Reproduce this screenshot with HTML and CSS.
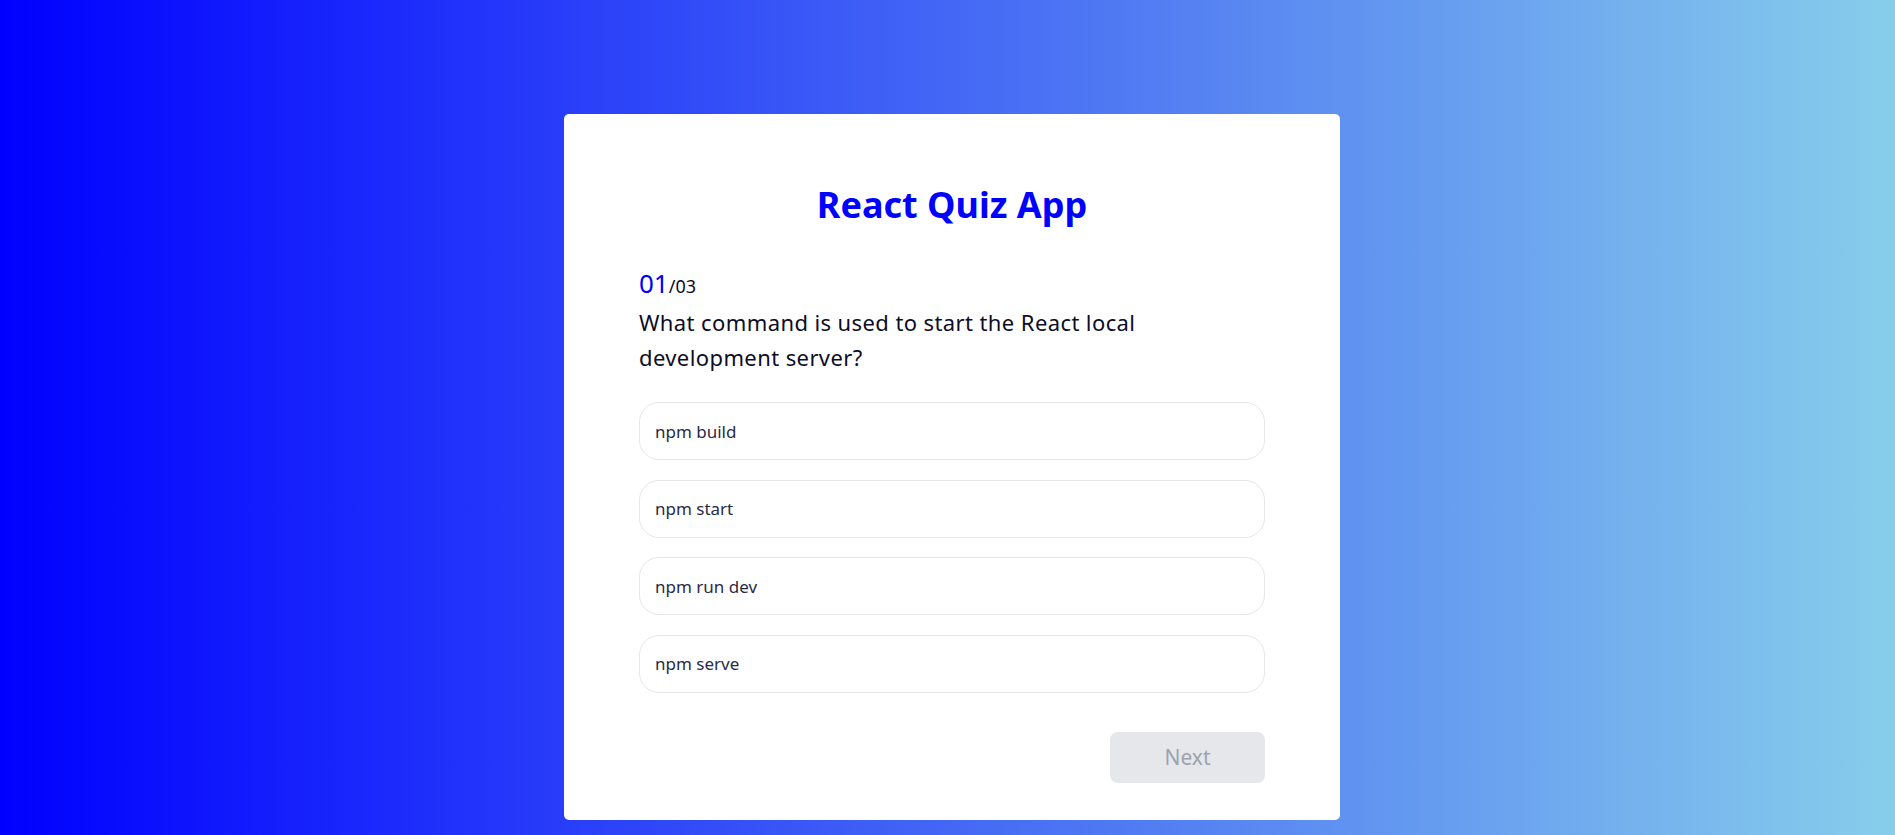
FILE: index.html
```html
<!DOCTYPE html>
<html lang="en">
<head>
<meta charset="utf-8">
<title>React Quiz App</title>
<link rel="stylesheet" href="styles.css">
</head>
<body>
<div class="page">
  <div class="card">
    <h1 class="title">React Quiz App</h1>
    <div class="counter"><span class="current">01</span><span class="total">/03</span></div>
    <p class="question">What command is used to start the React local development server?</p>
    <ul class="options">
      <li class="option">npm build</li>
      <li class="option">npm start</li>
      <li class="option">npm run dev</li>
      <li class="option">npm serve</li>
    </ul>
    <div class="actions">
      <button class="next" disabled>Next</button>
    </div>
  </div>
</div>
</body>
</html>
```

FILE: styles.css
```css
* { box-sizing: border-box; }
html, body { margin: 0; height: 100%; }
body {
  font-family: "Noto Sans", "DejaVu Sans", sans-serif;
  background: linear-gradient(to right, #0000ff 0%, #87ceeb 100%);
  overflow: hidden;
}
.page {
  display: flex;
  justify-content: center;
  padding: 114px 0 0 9px;
}
.card {
  width: 776px;
  background: #ffffff;
  border-radius: 5px;
  padding: 71px 75px 37px;
}
.title {
  margin: 0;
  text-align: center;
  font-size: 36px;
  line-height: 40px;
  font-weight: 700;
  color: #0000ff;
}
.counter {
  margin-top: 43px;
  line-height: 30px;
  font-size: 26px;
}
.current { color: #0000ff; }
.total { font-size: 18px; line-height: 1; color: #0a0a1f; }
.question {
  margin: 7px 0 0;
  max-width: 590px;
  font-size: 22px;
  letter-spacing: 0.4px;
  line-height: 35px;
  color: #0d0d26;
}
.options {
  list-style: none;
  margin: 27px 0 0;
  padding: 0;
  display: flex;
  flex-direction: column;
  gap: 19.5px;
}
.option {
  height: 58px;
  display: flex;
  align-items: center;
  padding: 0 15px;
  border: 1px solid #e5e7eb;
  border-radius: 20px;
  font-size: 17px;
  color: #2a2a45;
}
.actions {
  display: flex;
  justify-content: flex-end;
  margin-top: 39px;
}
.next {
  width: 155px;
  height: 51px;
  border: none;
  border-radius: 8px;
  background: #e5e7eb;
  color: #9ca3af;
  font-family: inherit;
  font-size: 21px;
}
```
